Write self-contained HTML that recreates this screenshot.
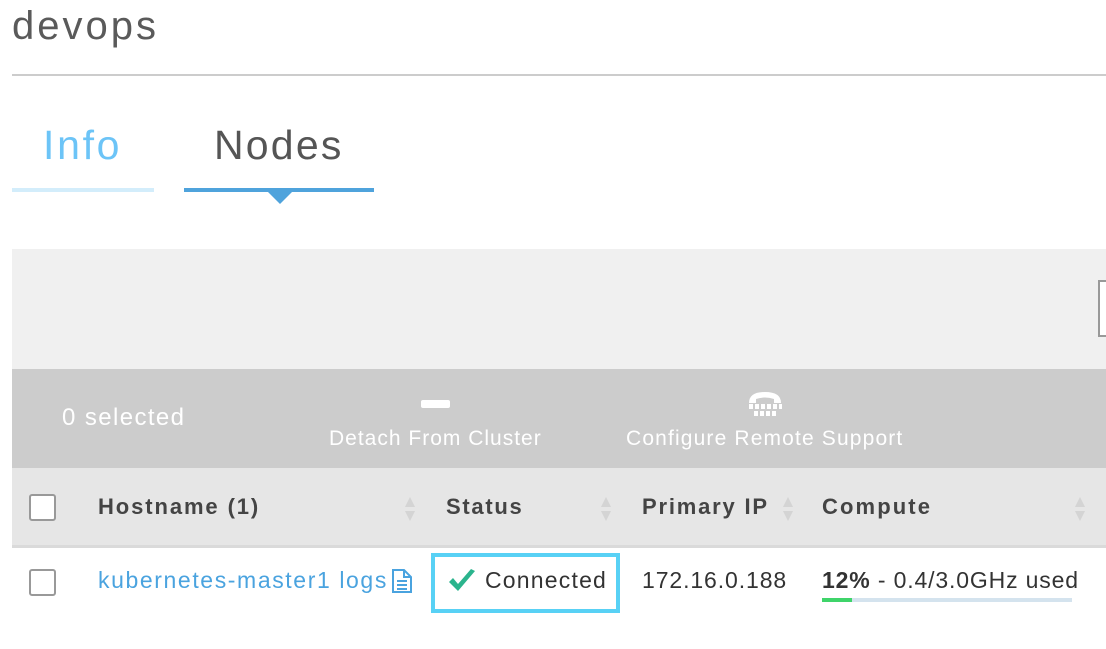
<!DOCTYPE html>
<html><head><meta charset="utf-8"><style>
*{margin:0;padding:0;box-sizing:border-box}
body{width:1106px;height:649px;background:#fff;font-family:"Liberation Sans",sans-serif;position:relative;overflow:hidden}
.a{position:absolute;white-space:nowrap}
.cb{position:absolute;width:27px;height:27px;border:2px solid #999;border-radius:3px;background:#fff}
.sort{position:absolute;width:10px;height:26px}
.sort:before{content:"";position:absolute;left:0;top:0;border-left:5px solid transparent;border-right:5px solid transparent;border-bottom:10px solid #d4d4d4}
.sort:after{content:"";position:absolute;left:0;top:14px;border-left:5px solid transparent;border-right:5px solid transparent;border-top:10px solid #d4d4d4}
.h{font-size:22px;font-weight:bold;color:#444;top:494px}
</style></head><body>
<div class="a" style="left:12px;top:4px;font-size:40px;color:#5a5a5a;letter-spacing:3px">devops</div>
<div class="a" style="left:12px;top:74px;width:1094px;height:2px;background:#cccccc"></div>
<div class="a" style="left:43px;top:122px;font-size:41px;color:#6cc4f7;letter-spacing:2.7px">Info</div>
<div class="a" style="left:214px;top:122px;font-size:41px;color:#555;letter-spacing:2.2px">Nodes</div>
<div class="a" style="left:12px;top:188px;width:142px;height:4px;background:#d3edfb"></div>
<div class="a" style="left:184px;top:188px;width:190px;height:4px;background:#4fa3dc"></div>
<div class="a" style="left:268px;top:192px;border-left:12px solid transparent;border-right:12px solid transparent;border-top:12px solid #4fa3dc"></div>
<div class="a" style="left:12px;top:249px;width:1094px;height:120px;background:#f0f0f0"></div>
<div class="a" style="left:1098px;top:280px;width:12px;height:57px;border:2px solid #999;background:#fff"></div>
<div class="a" style="left:12px;top:369px;width:1094px;height:99px;background:#cccccc"></div>
<div class="a" style="left:62px;top:404px;font-size:24px;color:#fff;letter-spacing:1.4px">0 selected</div>
<div class="a" style="left:421px;top:400px;width:29px;height:8px;background:#fff;border-radius:2px"></div>
<div class="a" style="left:329px;top:427px;font-size:21px;color:#fff;letter-spacing:1px">Detach From Cluster</div>
<svg class="a" style="left:746px;top:389px" width="38" height="34" viewBox="0 0 38 34"><path d="M3 14 Q3 3 19 3 Q35 3 35 14 L28 14 L28 10 Q19 7 10 10 L10 14 Z" fill="#fff"/><g fill="#fff"><rect x="3" y="15" width="4" height="5"/><rect x="9" y="15" width="4" height="5"/><rect x="15" y="15" width="4" height="5"/><rect x="21" y="15" width="4" height="5"/><rect x="27" y="15" width="4" height="5"/><rect x="33" y="15" width="3" height="5"/><rect x="8" y="22" width="4" height="5"/><rect x="14" y="22" width="4" height="5"/><rect x="20" y="22" width="4" height="5"/><rect x="26" y="22" width="4" height="5"/></g></svg>
<div class="a" style="left:626px;top:427px;font-size:21px;color:#fff;letter-spacing:1.15px">Configure Remote Support</div>
<div class="a" style="left:12px;top:468px;width:1094px;height:77px;background:#e6e6e6"></div>
<div class="a" style="left:12px;top:545px;width:1094px;height:3px;background:#dadada"></div>
<div class="cb" style="left:29px;top:494px"></div>
<div class="a h" style="left:98px;letter-spacing:1.9px">Hostname (1)</div>
<div class="sort" style="left:405px;top:497px"></div>
<div class="a h" style="left:446px;letter-spacing:1.7px">Status</div>
<div class="sort" style="left:601px;top:497px"></div>
<div class="a h" style="left:642px;letter-spacing:1.8px">Primary IP</div>
<div class="sort" style="left:783px;top:497px"></div>
<div class="a h" style="left:822px;letter-spacing:2.1px">Compute</div>
<div class="sort" style="left:1075px;top:497px"></div>
<div class="cb" style="left:29px;top:569px"></div>
<div class="a" style="left:98px;top:567px;font-size:23px;color:#4aa3df;letter-spacing:1.6px">kubernetes-master1 logs</div>
<svg class="a" style="left:391px;top:568px" width="22" height="26" viewBox="0 0 22 26"><path d="M2 2 H13 L20 9 V24 H2 Z M13 2 V9 H20" fill="none" stroke="#4aa3df" stroke-width="2"/><path d="M6 13 H16 M6 17 H16 M6 21 H16" stroke="#4aa3df" stroke-width="2"/></svg>
<div class="a" style="left:431px;top:553px;width:189px;height:60px;border:4px solid #58d1f5"></div>
<svg class="a" style="left:448px;top:569px" width="28" height="24" viewBox="0 0 28 24"><path d="M1 13 L10 22 L27 2 L23 0 L10 15 L5 9 Z" fill="#2bb48d"/></svg>
<div class="a" style="left:485px;top:567px;font-size:23px;color:#333;letter-spacing:1.2px">Connected</div>
<div class="a" style="left:642px;top:567px;font-size:23px;color:#333;letter-spacing:0.9px">172.16.0.188</div>
<div class="a" style="left:822px;top:567px;font-size:23px;color:#333;letter-spacing:0.85px"><b>12%</b> - 0.4/3.0GHz used</div>
<div class="a" style="left:822px;top:598px;width:250px;height:4px;background:#d4e3ee"></div>
<div class="a" style="left:822px;top:598px;width:30px;height:4px;background:#3fd46a"></div>
</body></html>
